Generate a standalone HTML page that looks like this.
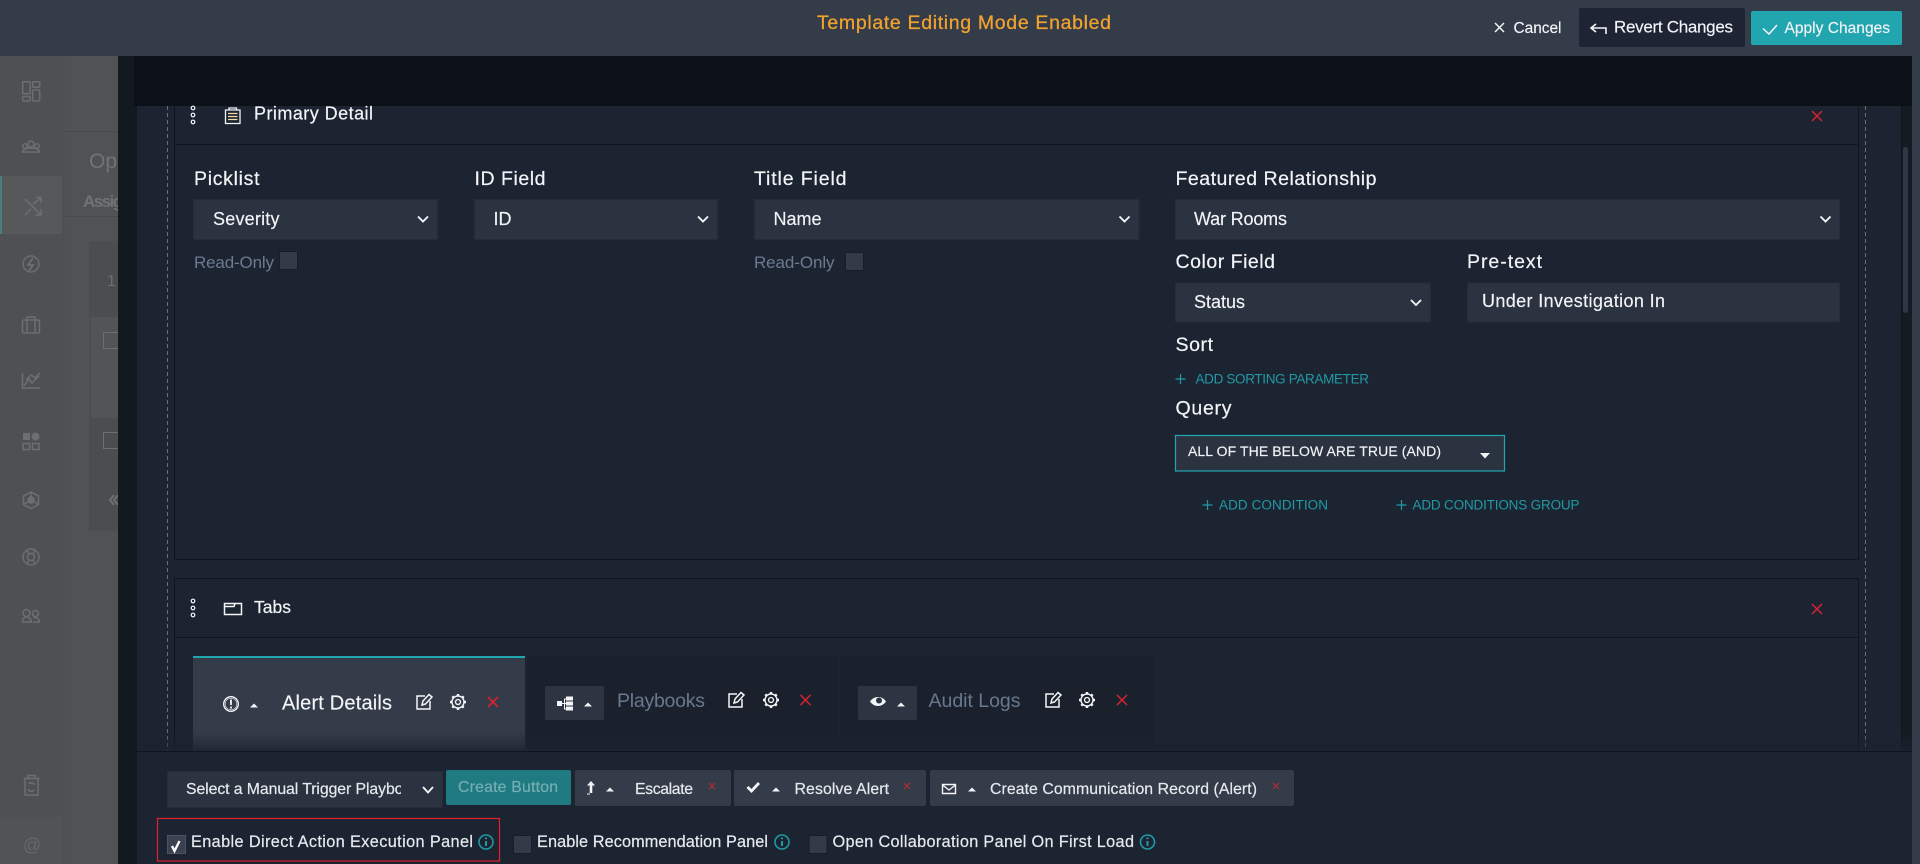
<!DOCTYPE html>
<html><head><meta charset="utf-8"><title>Template Editing</title>
<style>
html,body{margin:0;padding:0;background:#343b49;width:1920px;height:864px;overflow:hidden}
svg{display:block}
text{font-family:"Liberation Sans",sans-serif;fill:#f2f4f7}
.lb{font-size:19.5px;stroke:#f2f4f7;stroke-width:.2}
.sv{font-size:18px;stroke:#f2f4f7;stroke-width:.15}
.ft{font-size:15.8px;fill:#e6e9ee;stroke:#e6e9ee;stroke-width:.2}
.cb{font-size:16.3px;fill:#e6e9ee;stroke:#e6e9ee;stroke-width:.2}
.tl{font-size:13.5px;fill:#1f9aa5}
.ro{font-size:17px;fill:#6b7a90}
.sb{fill:none;stroke:#6c6e70;stroke-width:1.5}
</style></head><body>
<svg width="1920" height="864" viewBox="0 0 1920 864" xmlns="http://www.w3.org/2000/svg">
<defs>
<linearGradient id="fade" x1="0" y1="0" x2="0" y2="1"><stop offset="0" stop-color="#1b2230" stop-opacity="0"/><stop offset="1" stop-color="#1b2230" stop-opacity=".85"/></linearGradient>
<clipPath id="selclip"><rect x="180" y="771" width="221" height="36"/></clipPath>
<g id="rx"><path d="M-5 -5L5 5M5 -5L-5 5" stroke="#d8232f" stroke-width="1.5" fill="none"/></g>
<g id="chev"><path d="M-5 -2.5L0 2.5L5 -2.5" stroke="#f2f4f7" stroke-width="1.9" fill="none"/></g>
<g id="car"><path d="M-4 2.5L0 -1.5L4 2.5Z" fill="#f2f4f7"/></g>
<g id="edit" fill="none" stroke="#f4f6f8" stroke-width="1.5"><path d="M1 -6H-7V7H6V-1"/><path d="M-2 3L-1 -1L5 -7.5L8 -5L1.500 2Z"/></g>
<g id="gear" fill="none" stroke="#f4f6f8"><circle r="6" stroke-width="1.4"/><circle r="2.5" stroke-width="1.3"/><path stroke-width="2.4" d="M0 -6V-8M0 6V8M-6 0H-8M6 0H8M-4.200 -4.200L-5.700 -5.700M4.200 4.200L5.700 5.700M-4.200 4.200L-5.700 5.700M4.200 -4.200L5.700 -5.700"/></g>
<g id="info" fill="none" stroke="#1f9aa5"><circle r="7" stroke-width="1.6"/><path d="M0 -1V4" stroke-width="2"/><path d="M0 -4.500V-2.800" stroke-width="2"/></g>
<g id="dots" fill="none" stroke="#f2f4f7" stroke-width="1.200"><circle cy="-7" r="1.800"/><circle r="1.800"/><circle cy="7" r="1.800"/></g>
</defs>

<!-- header background -->
<rect width="1920" height="864" fill="#343b49"/>

<!-- dimmed left app -->
<rect x="0" y="56" width="65" height="808" fill="#4e5052"/>
<rect x="65" y="56" width="53" height="808" fill="#505254"/>
<rect x="65" y="131" width="53" height="1" fill="#484a4c"/>
<rect x="65" y="216" width="53" height="1" fill="#484a4c"/>
<rect x="89" y="241" width="29" height="290" fill="#4b4d4f"/>
<rect x="91" y="317" width="27" height="101" fill="#525456"/>
<rect x="0" y="176" width="62" height="58" fill="#575859"/>
<rect x="0" y="176" width="2" height="58" fill="#4d7d80"/>
<rect x="0" y="817" width="62" height="47" fill="#525355"/>
<text x="89" y="168" style="font-size:21px;fill:#717375">Op</text>
<text x="83" y="207" font-size="17" textLength="40" style="fill:#707274;font-weight:bold">Assig</text>
<text x="107" y="286" font-size="16" style="fill:#6c6e70">1</text>
<rect x="103.500" y="332.500" width="16" height="16" fill="none" stroke="#6c6e70"/>
<rect x="103.500" y="432.500" width="16" height="16" fill="none" stroke="#6c6e70"/>
<path d="M114 495L110 500L114 505M118 495L114 500L118 505" fill="none" stroke="#6c6e70" stroke-width="2"/>

<!-- sidebar icons -->
<g class="sb">
<rect x="22.700" y="81.700" width="7.500" height="12" rx="1"/><rect x="32.700" y="81.700" width="7" height="5.500" rx="1"/><rect x="22.700" y="96.500" width="7.500" height="4.500" rx="1"/><rect x="32.700" y="90" width="7" height="11" rx="1"/>
<circle cx="31" cy="144" r="3"/><circle cx="25" cy="146" r="2.300"/><circle cx="37" cy="146" r="2.300"/><path d="M22.500 152c0-3 5-4 8.500-4s8.500 1 8.500 4z"/>
<path d="M25 199L41 215M25 215L31 209M33 204L41 198M36 197.500H41V203M41 209V215H35"/>
<circle cx="31" cy="264" r="8"/><path d="M33 258L28 265H33L29 271" stroke-width="1.800"/>
<rect x="22.500" y="320" width="17" height="13" rx="1.500"/><path d="M27 320V317H35V320M27 320V333M35 320V333"/>
<path d="M22.500 373V388H40M24 386L29 379L32 383L39 376M26 380L31 375L35 378L40 373"/>
<rect x="23" y="433" width="7" height="7" fill="#6c6e70" stroke="none"/><circle cx="35.500" cy="436.500" r="4" fill="#6c6e70" stroke="none"/><rect x="23" y="443.500" width="6.500" height="6"/><rect x="32.500" y="443.500" width="6.500" height="6"/>
<path d="M31 492L38.500 496V504.500L31 508.500L23.500 504.500V496Z"/><circle cx="31" cy="500" r="3" fill="#6c6e70"/><path d="M31 492V497M24 504L28 502M38 504L34 502"/>
<circle cx="31" cy="557" r="8"/><circle cx="31" cy="557" r="3.500"/><path d="M27 550L29 554M35 550L33 554M27 564L29 560M35 564L33 560"/>
<circle cx="26.500" cy="613" r="3.500"/><circle cx="35.500" cy="613.500" r="3"/><path d="M22.500 622c0-7 8-7 9 0zM33 617.500c4-.5 6.500 1.500 6.500 4.500H33"/>
<path d="M25 779V795H38V779M23.500 778.500H39.500M28 778.500V775.500H35V778.500"/><path d="M34.500 785a3.500 3.500 0 0 0-6-1M28 789a3.500 3.500 0 0 0 6 1"/>
</g>
<text x="23" y="851" font-size="18" style="fill:#66686a">@</text>

<!-- modal backgrounds -->
<rect x="118" y="56" width="1794" height="808" fill="#121920"/>
<rect x="134" y="56" width="1778" height="50" fill="#0c1118"/>
<rect x="137" y="106" width="1765" height="646" fill="#1d2431"/>
<rect x="1902" y="106" width="10" height="646" fill="#141b23"/>
<rect x="1903" y="147" width="5" height="166" rx="2.500" fill="#2f3644"/>
<line x1="1901.500" y1="106" x2="1901.500" y2="752" stroke="#10151c"/>
<line x1="167.500" y1="106" x2="167.500" y2="752" stroke="#6a7078" stroke-dasharray="4 3"/>
<line x1="1865.500" y1="106" x2="1865.500" y2="752" stroke="#6a7078" stroke-dasharray="4 3"/>

<!-- panel 1 -->
<path d="M174.500 106V559.500H1858.500V106" fill="none" stroke="#10151c"/>
<line x1="175" y1="144.500" x2="1858" y2="144.500" stroke="#10151c"/>
<use href="#dots" x="193" y="115"/>
<g fill="none" stroke="#f2f4f7" stroke-width="1.300"><path d="M229 110H225.500V123.500H240V110H236.500M229 110V108H236.500V110Z"/><path d="M228 113.500H237.500M228 116.500H237.500M228 119.500H237.500" stroke="#f2d9a8"/></g>
<text x="254" y="119.500" class="lb" style="font-size:18px" textLength="119">Primary Detail</text>
<use href="#rx" x="1817" y="116"/>

<text x="194" y="185" class="lb" textLength="65.500">Picklist</text>
<text x="474.500" y="185" class="lb" textLength="71">ID Field</text>
<text x="754" y="185" class="lb" textLength="92.500">Title Field</text>
<text x="1175.500" y="185" class="lb" textLength="201">Featured Relationship</text>

<rect x="193.500" y="199.500" width="244" height="40" fill="#2b3240" stroke="#252b37"/>
<text x="213" y="225" class="sv" textLength="66.500">Severity</text><use href="#chev" x="423" y="219"/>
<rect x="474.500" y="199.500" width="243" height="40" fill="#2b3240" stroke="#252b37"/>
<text x="493.500" y="225" class="sv" textLength="18">ID</text><use href="#chev" x="703" y="219"/>
<rect x="754.500" y="199.500" width="384.500" height="40" fill="#2b3240" stroke="#252b37"/>
<text x="773.500" y="225" class="sv" textLength="48">Name</text><use href="#chev" x="1124.500" y="219"/>
<rect x="1175.500" y="199.500" width="664" height="40" fill="#2b3240" stroke="#252b37"/>
<text x="1194" y="225" class="sv" textLength="93">War Rooms</text><use href="#chev" x="1825.500" y="219"/>

<text x="194" y="268" class="ro" textLength="80">Read-Only</text>
<rect x="279.500" y="251.500" width="18" height="18" fill="#343a48" stroke="#181e28"/>
<text x="754" y="268" class="ro" textLength="80.500">Read-Only</text>
<rect x="845.500" y="252.500" width="18" height="18" fill="#343a48" stroke="#181e28"/>

<text x="1175.500" y="268" class="lb" textLength="99.500">Color Field</text>
<text x="1467" y="268" class="lb" textLength="75">Pre-text</text>
<rect x="1175.500" y="283" width="255" height="39" fill="#2b3240" stroke="#252b37"/>
<text x="1194" y="308" class="sv" textLength="51">Status</text><use href="#chev" x="1416" y="302.500"/>
<rect x="1467.500" y="283" width="372" height="39" fill="#2b3240" stroke="#252b37"/>
<text x="1482" y="307" class="sv" textLength="183">Under Investigation In</text>

<text x="1175.500" y="351" class="lb" textLength="37.500">Sort</text>
<path d="M1180.500 374V384M1175.500 379H1185.500" stroke="#1f9aa5" stroke-width="1.200"/>
<text x="1195.500" y="383.500" class="tl" textLength="173.500">ADD SORTING PARAMETER</text>
<text x="1175.500" y="414.500" class="lb" textLength="56">Query</text>
<rect x="1175.500" y="435.500" width="329" height="35.500" fill="#2b3240" stroke="#21a6b0" stroke-width="1.200"/>
<text x="1188" y="456" style="font-size:14px;stroke:#f2f4f7;stroke-width:.15" textLength="253">ALL OF THE BELOW ARE TRUE (AND)</text>
<path d="M1480 453H1490L1485 458.500Z" fill="#f2f4f7"/>
<path d="M1207.500 500V510M1202.500 505H1212.500" stroke="#1f9aa5" stroke-width="1.200"/>
<text x="1219" y="509.500" class="tl" textLength="109">ADD CONDITION</text>
<path d="M1401.500 500V510M1396.500 505H1406.500" stroke="#1f9aa5" stroke-width="1.200"/>
<text x="1412.500" y="509.500" class="tl" textLength="167">ADD CONDITIONS GROUP</text>

<!-- panel 2 -->
<path d="M174.500 752V578.500H1858.500V752" fill="none" stroke="#10151c"/>
<line x1="175" y1="637.500" x2="1858" y2="637.500" stroke="#10151c"/>
<use href="#dots" x="193" y="608"/>
<path d="M224.500 603.500H241.500V614.500H224.500ZM224.500 606.500H234L235 603.500" fill="none" stroke="#f2f4f7" stroke-width="1.500"/>
<text x="254" y="613" class="lb" style="font-size:17.500px" textLength="37">Tabs</text>
<use href="#rx" x="1817" y="609"/>

<!-- tabs -->
<rect x="193" y="656" width="332" height="96" fill="#343b49"/>
<rect x="193" y="656" width="332" height="2" fill="#21a6b0"/>
<rect x="527" y="656" width="312" height="93" fill="#1a212c"/>
<rect x="840" y="656" width="314" height="93" fill="#1a212c"/>
<rect x="527" y="749" width="627" height="2" fill="#252c38"/>
<g fill="none" stroke="#f2f4f7" stroke-width="1.400"><circle cx="231" cy="704" r="7.300"/><circle cx="231" cy="704" r="5.800" stroke-width=".6"/><path d="M231 699.500V705M231 706.500V708.500" stroke-width="1.800"/></g>
<use href="#car" x="254" y="705"/>
<text x="282" y="709.500" style="font-size:20px;stroke:#f2f4f7;stroke-width:.15" textLength="110">Alert Details</text>
<use href="#edit" x="424" y="702"/><use href="#gear" x="458" y="702"/>
<path d="M488 697L498 707M498 697L488 707" stroke="#d8232f" stroke-width="1.600" fill="none"/>

<rect x="545" y="686" width="59" height="34" rx="2" fill="#2e3542"/>
<g fill="#f2f4f7"><rect x="557" y="701" width="5" height="5"/><rect x="566" y="696.500" width="7" height="4"/><rect x="566" y="701.500" width="7" height="4"/><rect x="566" y="706.500" width="7" height="4"/><path d="M562 703h4v1h-4zM564 698.500h2v1h-1v9h1v1h-2z"/></g>
<use href="#car" x="588" y="704"/>
<text x="617" y="707" style="font-size:19.500px;fill:#68788e" textLength="88">Playbooks</text>
<use href="#edit" x="736" y="700"/><use href="#gear" x="771" y="700"/>
<path d="M800.500 695L810.500 705M810.500 695L800.500 705" stroke="#d8232f" stroke-width="1.500" fill="none"/>

<rect x="858" y="686" width="59" height="34" rx="2" fill="#2e3542"/>
<path d="M870 701.500C874 695.500 882 695.500 886 701.500C882 707.500 874 707.500 870 701.500Z" fill="#f2f4f7"/><circle cx="879" cy="700.500" r="3" fill="#2e3542"/>
<use href="#car" x="901" y="704"/>
<text x="928.500" y="707" style="font-size:19.500px;fill:#68788e" textLength="92">Audit Logs</text>
<use href="#edit" x="1053" y="700"/><use href="#gear" x="1087" y="700"/>
<path d="M1117 695L1127 705M1127 695L1117 705" stroke="#d8232f" stroke-width="1.500" fill="none"/>

<rect x="137" y="732" width="1775" height="20" fill="url(#fade)"/>

<!-- footer -->
<rect x="137" y="752" width="1775" height="112" fill="#1d2431"/>
<rect x="137" y="751" width="1775" height="1" fill="#10151c"/>
<rect x="167.500" y="771.500" width="275" height="36" fill="#2b3240" stroke="#252b37"/>
<g clip-path="url(#selclip)"><text x="186" y="794" class="ft" textLength="234">Select a Manual Trigger Playbook</text></g>
<path d="M423 787L428 792.500L433 787" stroke="#f2f4f7" stroke-width="1.900" fill="none"/>
<rect x="446" y="770" width="125" height="35" rx="2" fill="#1f7a82"/>
<text x="458" y="792" style="font-size:15.800px;fill:#74aeb3;stroke:#74aeb3;stroke-width:.2" textLength="100">Create Button</text>

<rect x="575" y="770" width="156" height="36" rx="2" fill="#343b49"/>
<path d="M591 781L595 785.500H592.300V793H589.700V785.500H587Z" fill="#f2f4f7"/><path d="M587 794H590" stroke="#f2f4f7"/>
<use href="#car" x="610" y="789"/>
<text x="635" y="794" class="ft" textLength="58">Escalate</text>
<path d="M709 783L715 789M715 783L709 789" stroke="#b52a35" stroke-width="1.200" fill="none"/>

<rect x="734" y="770" width="192" height="36" rx="2" fill="#343b49"/>
<path d="M747.500 787L751.500 791L759 783" stroke="#f2f4f7" stroke-width="2.800" fill="none"/>
<use href="#car" x="776" y="789"/>
<text x="794.500" y="794" class="ft" textLength="94.500">Resolve Alert</text>
<path d="M904 783L910 789M910 783L904 789" stroke="#b52a35" stroke-width="1.200" fill="none"/>

<rect x="930" y="770" width="364" height="36" rx="2" fill="#343b49"/>
<path d="M942.500 784.500H955.500V793.500H942.500ZM942.500 785L949 790L955.500 785" fill="none" stroke="#f2f4f7" stroke-width="1.400"/>
<use href="#car" x="972" y="789"/>
<text x="990" y="794" class="ft" textLength="267">Create Communication Record (Alert)</text>
<path d="M1273 783L1279 789M1279 783L1273 789" stroke="#b52a35" stroke-width="1.200" fill="none"/>

<!-- checks -->
<rect x="157.500" y="818.500" width="342" height="42.500" fill="none" stroke="#e0202b" stroke-width="1.200"/>
<rect x="167.500" y="835.500" width="18" height="18" fill="#3a4150" stroke="#4c5260"/>
<path d="M172 846L174.500 851L179.500 841" fill="none" stroke="#fff" stroke-width="2.300"/>
<text x="191" y="847" class="cb" textLength="282">Enable Direct Action Execution Panel</text>
<use href="#info" x="486" y="842"/>
<rect x="513.500" y="835.500" width="18" height="18" fill="#343a48" stroke="#181e28"/>
<text x="537" y="847" class="cb" textLength="231">Enable Recommendation Panel</text>
<use href="#info" x="782" y="842"/>
<rect x="809" y="835.500" width="18" height="18" fill="#343a48" stroke="#181e28"/>
<text x="832.500" y="847" class="cb" textLength="301.500">Open Collaboration Panel On First Load</text>
<use href="#info" x="1147.500" y="842"/>

<!-- header -->
<rect x="0" y="0" width="1920" height="56" fill="#343b49"/>
<text x="817" y="29" style="font-size:19.500px;fill:#f0a22e;stroke:#f0a22e;stroke-width:.3" textLength="294">Template Editing Mode Enabled</text>
<path d="M1495 23L1504 32M1504 23L1495 32" stroke="#f2f4f7" stroke-width="1.500" fill="none"/>
<text x="1513.500" y="33" style="font-size:15.500px;stroke:#f2f4f7;stroke-width:.15" textLength="48">Cancel</text>
<rect x="1579" y="8" width="166" height="39" rx="2" fill="#1e2433"/>
<path d="M1591 28H1606V34M1596 24L1591 28L1596 32" fill="none" stroke="#f2f4f7" stroke-width="1.600"/>
<text x="1614" y="32.500" style="font-size:17px;stroke:#f2f4f7;stroke-width:.15" textLength="119">Revert Changes</text>
<rect x="1751" y="11" width="151" height="34" rx="2" fill="#21a6b0"/>
<path d="M1763 28.500L1769 34L1777 25" fill="none" stroke="#f2f4f7" stroke-width="1.500"/>
<text x="1784.500" y="33" style="font-size:15.500px;stroke:#f2f4f7;stroke-width:.15" textLength="105.500">Apply Changes</text>
</svg>
</body></html>
